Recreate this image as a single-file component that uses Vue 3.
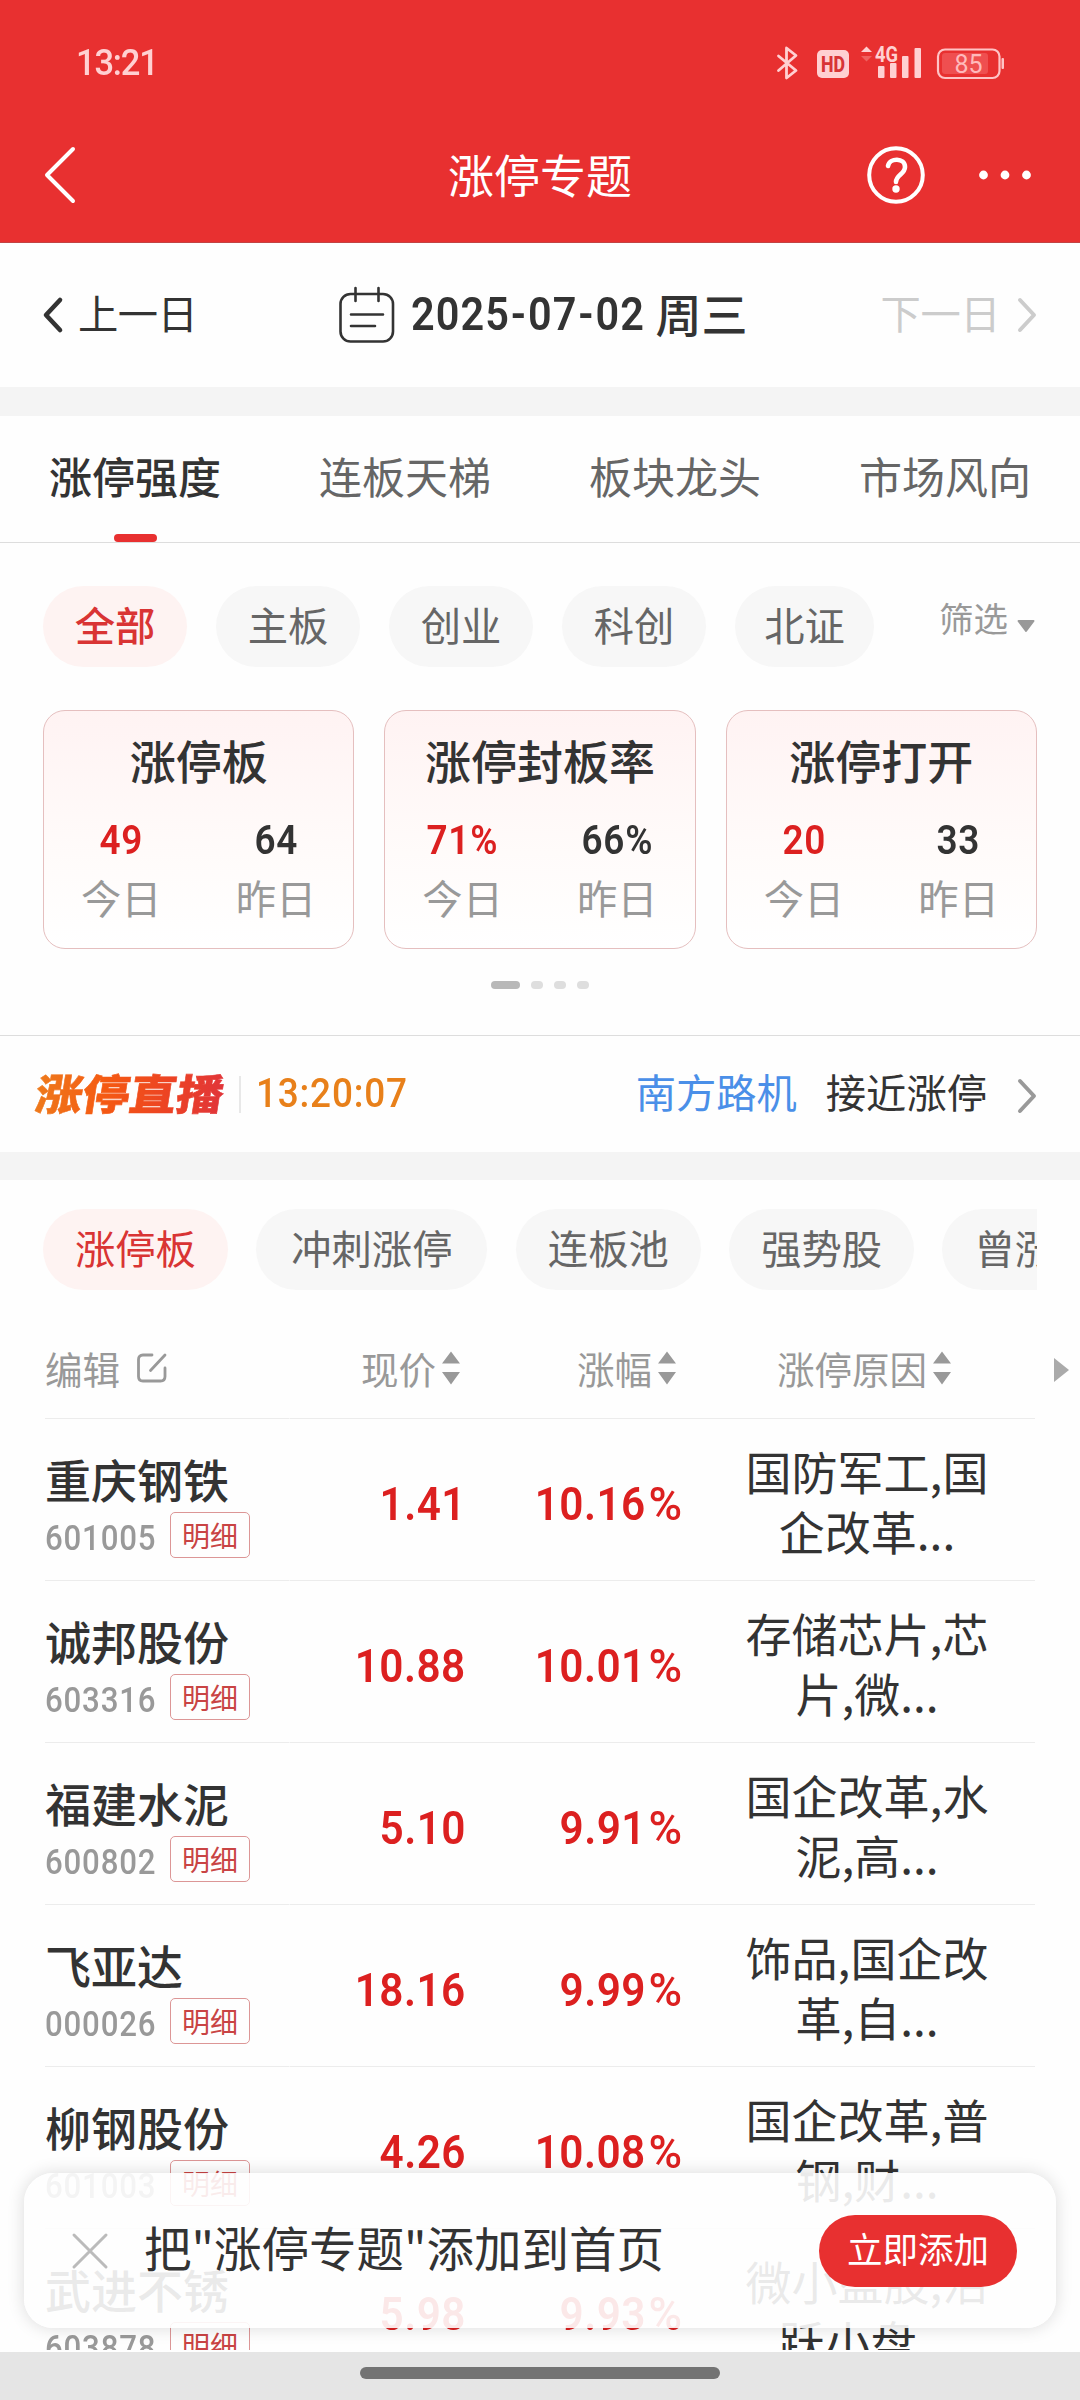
<script setup>
const tabs = ['涨停强度', '连板天梯', '板块龙头', '市场风向']
const markets = ['全部', '主板', '创业', '科创', '北证']
const cards = [
  { title: '涨停板', today: '49', prev: '64' },
  { title: '涨停封板率', today: '71%', prev: '66%' },
  { title: '涨停打开', today: '20', prev: '33' },
]
const pools = ['涨停板', '冲刺涨停', '连板池', '强势股', '曾涨停']
const dateParts = ['2025', '07', '02']
const stocks = [
  { name: '重庆钢铁', code: '601005', price: '1.41', pct: '10.16', why: ['国防军工,国', '企改革...'] },
  { name: '诚邦股份', code: '603316', price: '10.88', pct: '10.01', why: ['存储芯片,芯', '片,微...'] },
  { name: '福建水泥', code: '600802', price: '5.10', pct: '9.91', why: ['国企改革,水', '泥,高...'] },
  { name: '飞亚达', code: '000026', price: '18.16', pct: '9.99', why: ['饰品,国企改', '革,自...'] },
  { name: '柳钢股份', code: '601003', price: '4.26', pct: '10.08', why: ['国企改革,普', '钢,财...'] },
  { name: '武进不锈', code: '603878', price: '5.98', pct: '9.93', why: ['微小盘股,活', '跃小盘...'] },
]
</script>

<template>
  <div class="screen">
    <header class="top">
      <div class="status">
        <span class="clock">13:21</span>
        <svg class="sys" width="232" height="40" viewBox="775 42 232 40">
          <path d="M778.5 55 L796 69.5 L786.5 77 V47 L796 54.5 L778.5 69.5" fill="none" stroke="#ffd0d2" stroke-width="2.8" stroke-linejoin="round" stroke-linecap="round" />
          <rect x="817" y="49" width="32" height="28" rx="5" fill="#ffd0d2" />
          <text x="833" y="71" text-anchor="middle" font-size="22.500" font-weight="800" textLength="24" lengthAdjust="spacingAndGlyphs" fill="#d83436">HD</text>
          <path d="M861 51 L866.5 45.5 L872 51Z" fill="#ffd0d2" />
          <path d="M861 55 L866.5 60.5 L872 55Z" fill="#f0605f" />
          <text x="875" y="60.500" font-size="21.500" font-weight="700" textLength="23" lengthAdjust="spacingAndGlyphs" fill="#ffd0d2">4G</text>
          <g fill="#ffd0d2">
            <rect x="878" y="65" width="6.5" height="12" rx="1" />
            <rect x="890" y="62" width="6.5" height="15" rx="1" />
            <rect x="902" y="55" width="6.5" height="22" rx="1" />
            <rect x="914.5" y="47" width="6.5" height="30" rx="1" />
          </g>
          <rect x="938" y="48.5" width="61.5" height="28.5" rx="7" fill="none" stroke="#ffc3c5" stroke-width="2.2" />
          <rect x="942" y="52" width="46" height="21" rx="3" fill="#ef4f50" />
          <rect x="1001.500" y="57" width="2.500" height="11" rx="1" fill="#ffc3c5" />
          <text x="968.500" y="71.500" text-anchor="middle" font-size="25" fill="#ffb9bb">85</text>
        </svg>
      </div>
      <div class="nav">
        <svg class="back" width="36" height="60" viewBox="0 0 36 60"><path d="M31 4 L5 30 L31 56" fill="none" stroke="#fff" stroke-width="4" stroke-linecap="round" stroke-linejoin="round" /></svg>
        <h1>涨停专题</h1>
        <div class="nav-right">
          <svg width="60" height="60" viewBox="0 0 60 60">
            <circle cx="30" cy="30" r="26.800" fill="none" stroke="#fff" stroke-width="4" />
            <path d="M22 21 C23.500 12.500 39 12.500 39 22 C39 29 30 30 30 37" fill="none" stroke="#fff" stroke-width="4.600" stroke-linecap="round" />
            <circle cx="30" cy="44" r="3.700" fill="#fff" />
          </svg>
          <svg width="56" height="12" viewBox="0 0 56 12" fill="#fff"><circle cx="6.500" cy="6" r="4.400" /><circle cx="28" cy="6" r="4.400" /><circle cx="49.500" cy="6" r="4.400" /></svg>
        </div>
      </div>
    </header>

    <section class="dates">
      <div class="day">
        <svg width="22" height="38" viewBox="0 0 22 38"><path d="M18 4 L4 19 L18 34" fill="none" stroke="#333" stroke-width="4.600" stroke-linecap="round" stroke-linejoin="round" /></svg>
        <span>上一日</span>
      </div>
      <div class="current">
        <svg width="56" height="58" viewBox="0 0 56 58" fill="none" stroke="#333" stroke-width="2.600" stroke-linecap="round">
          <rect x="1.500" y="8" width="52.500" height="47.500" rx="10" />
          <path d="M16.500 2 V15 M39.500 2 V15 M12 28.500 H44 M12 40 H36" />
        </svg>
        <span class="num date"><template v-for="(p, i) in dateParts" :key="i"><i v-if="i" class="dash">-</i>{{ p }}</template></span>
        <span class="week">周三</span>
      </div>
      <div class="day next">
        <span>下一日</span>
        <svg width="22" height="38" viewBox="0 0 22 38"><path d="M4 4 L18 19 L4 34" fill="none" stroke="#ccc" stroke-width="4" stroke-linecap="round" stroke-linejoin="round" /></svg>
      </div>
    </section>
    <div class="band b1"></div>

    <nav class="tabs">
      <div v-for="(t, i) in tabs" :key="t" class="tab" :class="{ on: i === 0 }"><span>{{ t }}</span></div>
    </nav>

    <section class="overview">
      <div class="markets">
        <div v-for="(m, i) in markets" :key="m" class="chip" :class="{ on: i === 0 }">{{ m }}</div>
        <div class="filter">
          <span>筛选</span>
          <svg width="18" height="14" viewBox="0 0 18 14"><path d="M1.500 2 H16.500 L9 12Z" fill="#999" stroke="#999" stroke-width="2" stroke-linejoin="round" /></svg>
        </div>
      </div>
      <div class="cards">
        <div v-for="c in cards" :key="c.title" class="card">
          <h2>{{ c.title }}</h2>
          <div class="pair">
            <div><b class="num up">{{ c.today }}</b><em>今日</em></div>
            <div><b class="num">{{ c.prev }}</b><em>昨日</em></div>
          </div>
        </div>
      </div>
      <div class="pager"><i class="on"></i><i></i><i></i><i></i></div>
    </section>

    <section class="live">
      <span class="brand">涨停直播</span>
      <i class="sep"></i>
      <span class="num time">13:20:07</span>
      <span class="who">南方路机</span>
      <span class="what">接近涨停</span>
      <svg width="22" height="38" viewBox="0 0 22 38"><path d="M4 4 L18 19 L4 34" fill="none" stroke="#999" stroke-width="4" stroke-linecap="round" stroke-linejoin="round" /></svg>
    </section>
    <div class="band b2"></div>

    <section class="pools">
      <div v-for="(p, i) in pools" :key="p" class="chip" :class="{ on: i === 0, wide: p.length === 4 }">{{ p }}</div>
    </section>

    <section class="table">
      <div class="row head">
        <div class="c1">
          <span>编辑</span>
          <svg width="32" height="32" viewBox="0 0 32 32" fill="none" stroke="#999" stroke-width="2.800" stroke-linecap="round" stroke-linejoin="round"><path d="M16 3 H7 Q2.500 3 2.500 7.500 V24.500 Q2.500 29 7 29 H24.500 Q29 29 29 24.500 V16 M14.500 18.500 L29 3" /></svg>
        </div>
        <div v-for="(h, i) in ['现价', '涨幅', '涨停原因']" :key="h" :class="'c' + (i + 2)">
          <span>{{ h }}</span>
          <svg width="18" height="34" viewBox="0 0 18 34" fill="#999"><path d="M9 0.500 L18 12.500 H0Z M0 21 H18 L9 33.500Z" /></svg>
        </div>
        <svg class="more" width="16" height="26" viewBox="0 0 16 26"><path d="M1 1 L16 13 L1 25Z" fill="#aaa" /></svg>
      </div>
      <div v-for="s in stocks" :key="s.code" class="row">
        <div class="c1">
          <div class="name">{{ s.name }}</div>
          <div class="sub"><span class="num code">{{ s.code }}</span><span class="tag">明细</span></div>
        </div>
        <div class="c2"><span class="num val">{{ s.price }}</span></div>
        <div class="c3"><span class="num val">{{ s.pct }}<span class="pc">%</span></span></div>
        <div class="c4"><p v-for="w in s.why" :key="w">{{ w }}</p></div>
      </div>
    </section>

    <div class="toast">
      <svg width="38" height="38" viewBox="0 0 38 38"><path d="M3 3 L35 35 M35 3 L3 35" stroke="#bbb" stroke-width="3" stroke-linecap="round" /></svg>
      <span class="msg">把"涨停专题"添加到首页</span>
      <span class="add">立即添加</span>
    </div>

    <footer class="home"><i></i></footer>
  </div>
</template>

<style>
html, body { margin: 0; background: #fff; }
</style>

<style scoped>
* { box-sizing: border-box; }
.screen {
  position: relative; width: 1080px; height: 2400px; overflow: hidden;
  display: flex; flex-direction: column; background: #fefefe; color: #333;
  font-family: "Noto Sans CJK SC", sans-serif; line-height: 1;
}
.screen > * { flex-shrink: 0; }
svg { display: block; flex-shrink: 0; }
svg text { font-family: Roboto, sans-serif; }
i, em { font-style: normal; }
/* Figures are set narrow, with open tracking */
.num { display: inline-block; font-family: Roboto, "Noto Sans CJK SC", sans-serif; font-weight: 600; white-space: nowrap; transform: scaleX(0.9); transform-origin: left center; }

.top { height: 243px; background: #e83030; border-bottom: 1px solid #c24444; }
.status { height: 126px; padding: 0 73px 0 76px; display: flex; justify-content: space-between; align-items: center; }
.clock { font-family: Roboto, sans-serif; font-size: 37.500px; font-weight: 500; color: #ffd0d2; letter-spacing: -1.300px; transform: scaleX(0.92); transform-origin: left center; }
.nav { height: 98px; padding: 0 47px 0 43px; display: grid; grid-template-columns: 1fr auto 1fr; align-items: center; }
.back { margin-left: -1px; }
.nav h1 { margin: 0; padding: 0 0 5px 4px; font-size: 46px; font-weight: 400; color: #fff; }
.nav-right { display: flex; align-items: center; justify-content: flex-end; gap: 51px; }

.dates { height: 144px; padding: 0 42px; display: grid; grid-template-columns: 1fr auto 1fr; align-items: center; }
.day { display: flex; align-items: center; gap: 14px; font-size: 40.300px; letter-spacing: -0.500px; }
.day span { padding-bottom: 5px; }
.day.next { justify-content: flex-end; gap: 16px; color: #ccc; }
.current { display: flex; align-items: center; padding-left: 6px; }
.date { margin-left: 16px; width: 232px; padding-bottom: 2px; font-size: 46px; letter-spacing: 1.200px; }
.dash { display: inline-block; width: 20px; text-align: center; }
.week { margin-left: 13px; padding-bottom: 7px; font-size: 46px; font-weight: 500; }
.band { background: #f4f4f4; }
.b1 { height: 29px; }
.b2 { height: 28px; }

.tabs { height: 127px; display: grid; grid-template-columns: repeat(4, 1fr); border-bottom: 1px solid #ddd; }
.tab { position: relative; padding-bottom: 7px; display: flex; align-items: center; justify-content: center; font-size: 43px; color: #666; }
.tab.on { color: #333; font-weight: 500; }
.tab.on::after { content: ""; position: absolute; bottom: 0; left: 50%; margin-left: -21.500px; width: 43px; height: 8px; border-radius: 4px; background: #e83030; }

.overview { height: 493px; padding: 43px 43px 0; border-bottom: 1px solid #ddd; }
.markets { display: flex; gap: 29px; }
.chip { flex: none; height: 81px; padding: 0 32px 5px; display: flex; align-items: center; justify-content: center; border-radius: 41px; background: #f7f7f7; color: #666; font-size: 40.300px; white-space: nowrap; }
.chip.on { background: #fef3f2; color: #d93434; font-weight: 500; }
.chip.wide { padding: 0 35px 5px; }
.markets .chip { width: 144px; }
.markets .chip:nth-child(5) { width: 139px; }
.filter { margin-left: auto; padding: 14px 2px 0 0; display: flex; gap: 9px; font-size: 34.500px; color: #999; }
.filter svg { margin-top: 19px; }
.cards { margin-top: 43px; display: grid; grid-template-columns: repeat(3, 1fr); gap: 30px; }
.card { height: 239px; border: 1px solid #e5bfbf; border-radius: 22px; background: linear-gradient(#fff3f3, #fffbfa 60%, #fff); text-align: center; }
.card h2 { margin: 25px 0 0; font-size: 46px; font-weight: 500; }
.pair { display: grid; grid-template-columns: 1fr 1fr; margin-top: 38px; }
.pair b { display: block; font-size: 41px; letter-spacing: 0.800px; transform-origin: center; }
.pair b.up { color: #dc2020; }
.pair em { display: block; margin: 16px 0 0; font-size: 40.300px; color: #999; }
.pager { margin-top: 32px; display: flex; justify-content: center; gap: 11px; }
.pager i { width: 12px; height: 8px; border-radius: 4px; background: #dedede; }
.pager i.on { width: 29px; background: #b8b8b8; }

.live { height: 116px; padding: 0 42px 0 36px; display: flex; align-items: center; font-size: 40.300px; }
.live svg { margin-top: 3px; }
.brand { width: 172px; margin-right: 31px; padding-bottom: 4px; font-size: 42px; font-weight: 900; white-space: nowrap; transform-origin: left center; transform: scaleX(1.12) skewX(-8deg); color: transparent; background: linear-gradient(90deg, #ee7a1c, #f55a12 35%, #ec4224 70%, #e0343c); background-clip: text; -webkit-background-clip: text; -webkit-text-stroke: 0.600px transparent; }
.sep { width: 2px; height: 37px; background: #e8e8e8; }
.time { margin-left: 15px; padding-bottom: 2px; font-size: 41px; font-weight: 500; letter-spacing: 0.900px; color: #e8801a; }
.who { margin-left: auto; padding-bottom: 5px; color: #4a8fe8; }
.what { margin: 0 29px; padding-bottom: 5px; }

.pools { height: 138px; margin: 0 43px; padding-top: 29px; display: flex; gap: 28.400px; overflow: hidden; }
.pools .chip.on { font-weight: 400; }

.row { height: 162px; padding-left: 45px; display: grid; grid-template-columns: 245px 176px 215px 354px 45px; align-items: center; }
.row > [class^="c"] { height: 100%; border-bottom: 1px solid #ececec; }
.row > .c1 { border-right: 1px solid #fefefe; }
.row.head { height: 101px; font-size: 37.500px; color: #999; }
.head > div { display: flex; align-items: center; }
.head .c1 { gap: 16px; }
.head .c2, .head .c3 { justify-content: flex-end; gap: 6px; padding-right: 6px; }
.head .c3 { padding-right: 5px; }
.head .c4 { gap: 6px; padding-left: 96px; }
.more { margin: 2px 0 0 18px; }
.table { height: 1032px; overflow: hidden; }
.name { margin-top: 36px; font-size: 46px; font-weight: 500; }
.sub { margin-top: 11px; display: flex; align-items: center; }
.num.code { width: 125px; padding-top: 7px; font-size: 34.700px; font-weight: 500; letter-spacing: 0.900px; color: #999; }
.tag { width: 80px; height: 46px; display: flex; align-items: center; justify-content: center; border: 1px solid #dc9696; border-radius: 5px; font-size: 28px; color: #c94444; }
.row:not(.head) .c2, .row:not(.head) .c3 { display: flex; align-items: center; justify-content: flex-end; padding-top: 8px; }
.val { font-size: 46px; letter-spacing: 0.500px; color: #dc2020; transform: scaleX(0.92); transform-origin: right center; }
.pc { display: inline-block; margin-left: 4px; font-weight: 500; transform: scaleX(1.08); transform-origin: center; }
.c4 p { margin: 0; line-height: 60px; font-size: 46px; text-align: center; }
.row:not(.head) .c4 { padding: 21px 0 0 18px; }

.toast { position: absolute; left: 24px; top: 2173px; width: 1032px; height: 155px; padding: 0 39px 0 47px; display: flex; align-items: center; border-radius: 29px; background: rgba(254, 254, 254, 0.9); box-shadow: 0 0 17px rgba(0, 0, 0, 0.14); }
.msg { margin-left: 35px; padding-bottom: 7px; font-size: 47.500px; white-space: nowrap; }
.add { margin-left: auto; width: 198px; height: 72px; padding-bottom: 5px; border-radius: 36px; display: flex; align-items: center; justify-content: center; background: #e83030; color: #fff; font-size: 35.500px; }

.home { margin-top: 2px; height: 48px; display: flex; justify-content: center; padding-top: 15px; background: #e5e5e5; }
.home i { width: 360px; height: 12px; border-radius: 6px; background: #737373; }
</style>
